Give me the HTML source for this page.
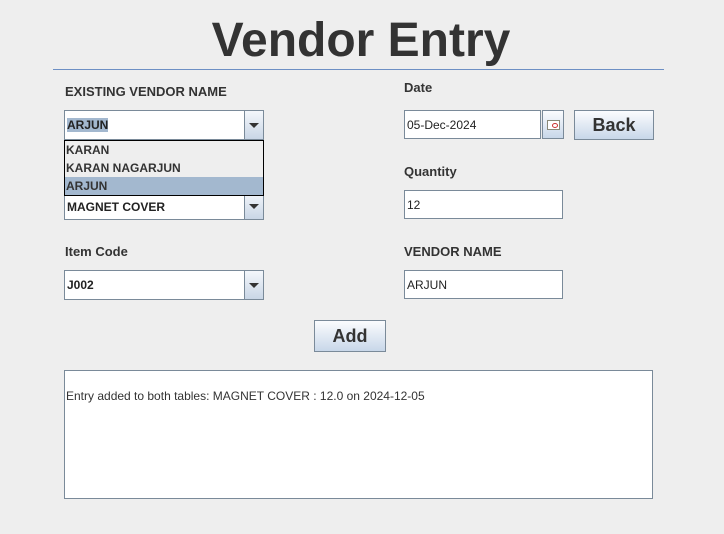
<!DOCTYPE html><html><head><style>
body{margin:0;width:724px;height:534px;background:#eeeeee;font-family:"Liberation Sans",sans-serif;position:relative;overflow:hidden}
.a{position:absolute}
.lbl{font-weight:bold;font-size:13px;color:#333}
.fld{background:#fff;border:1px solid #7a8a99;box-sizing:border-box;font-size:12px;color:#222;padding-left:2px;display:flex;align-items:center}
.cb{background:#fff;border:1px solid #7a8a99;box-sizing:border-box;font-size:12px;font-weight:bold;color:#222}
.cb .t{position:absolute;left:2px;top:0;bottom:0;display:flex;align-items:center}
.cb .ar{position:absolute;right:0;top:0;bottom:0;width:18px;border-left:1px solid #7a8a99;background:linear-gradient(#f4f7fb,#c9d6e6)}
.cb .ar:after{content:"";position:absolute;left:4px;top:12px;border-left:5px solid transparent;border-right:5px solid transparent;border-top:5px solid #333}
.btn{border:1px solid #7a8a99;box-sizing:border-box;background:linear-gradient(#fbfcfe,#c8d7e9);font-weight:bold;color:#333;display:flex;align-items:center;justify-content:center}
</style></head><body>
<div class="a" style="left:0;width:722px;top:13px;text-align:center;font-weight:bold;font-size:48px;color:#333;line-height:56px">Vendor Entry</div>
<div class="a" style="left:53px;top:69px;width:611px;height:1px;background:#6d8fc4"></div>
<div class="a lbl" style="left:65px;top:84px">EXISTING VENDOR NAME</div>
<div class="a cb" style="left:64px;top:110px;width:200px;height:30px"><span class="t"><span style="background:#a3b8cf">ARJUN</span></span><div class="ar"></div></div>
<div class="a cb" style="left:64px;top:191px;width:200px;height:29px"><span class="t" style="top:2px">MAGNET COVER</span><div class="ar"></div></div>
<div class="a" style="left:64px;top:140px;width:200px;height:56px;border:1px solid #000;box-sizing:border-box;background:#eeeeee;font-size:12px;font-weight:bold;color:#333">
<div style="height:18px;line-height:18px;padding-left:1px">KARAN</div>
<div style="height:18px;line-height:18px;padding-left:1px">KARAN NAGARJUN</div>
<div style="height:18px;line-height:18px;padding-left:1px;background:#a3b8cf">ARJUN</div></div>
<div class="a lbl" style="left:65px;top:244px">Item Code</div>
<div class="a cb" style="left:64px;top:270px;width:200px;height:30px"><span class="t">J002</span><div class="ar"></div></div>
<div class="a lbl" style="left:404px;top:80px">Date</div>
<div class="a fld" style="left:404px;top:110px;width:137px;height:29px">05-Dec-2024</div>
<div class="a btn" style="left:542px;top:110px;width:22px;height:29px"><div style="width:11px;height:8px;border:1px solid #887;background:#fff;position:relative"><div style="position:absolute;right:1px;top:2px;width:4px;height:3px;border:1px solid #c33;border-radius:50%"></div></div></div>
<div class="a btn" style="left:574px;top:110px;width:80px;height:30px;font-size:18px">Back</div>
<div class="a lbl" style="left:404px;top:164px">Quantity</div>
<div class="a fld" style="left:404px;top:190px;width:159px;height:29px">12</div>
<div class="a lbl" style="left:404px;top:244px">VENDOR NAME</div>
<div class="a fld" style="left:404px;top:270px;width:159px;height:29px">ARJUN</div>
<div class="a btn" style="left:314px;top:320px;width:72px;height:32px;font-size:18px">Add</div>
<div class="a" style="left:64px;top:370px;width:589px;height:129px;background:#fff;border:1px solid #7a8a99;box-sizing:border-box;font-size:12px;color:#333;padding:18px 0 0 1px">Entry added to both tables: MAGNET COVER : 12.0 on 2024-12-05</div>
</body></html>
